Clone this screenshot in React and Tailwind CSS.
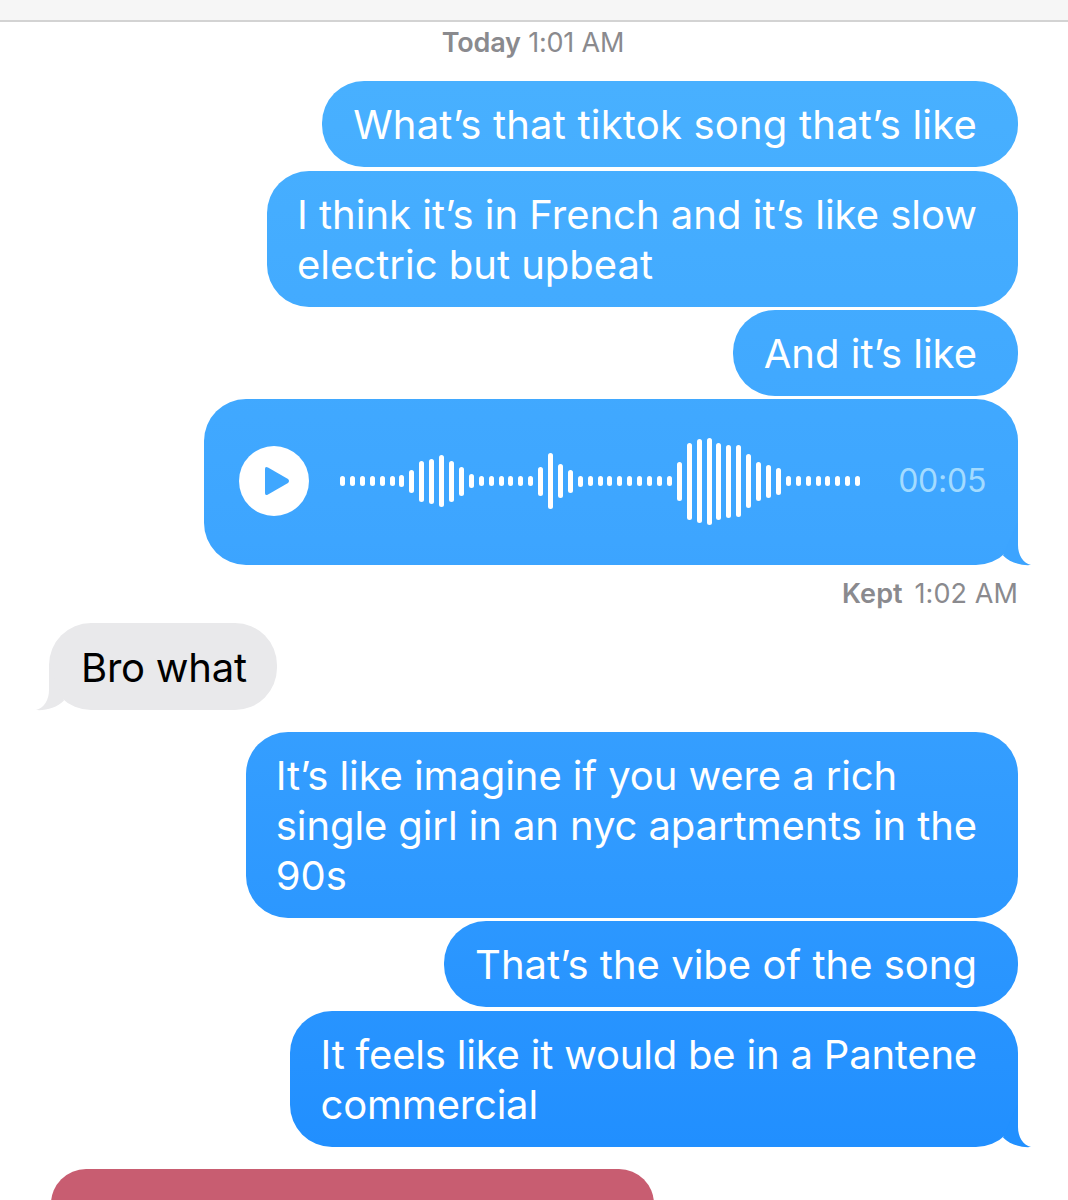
const font = { fontFamily: 'Inter, "Liberation Sans", sans-serif' }

const small = 10
const bars = [
  small, small, small, small, small, small, 12, 23, 41, 45, 52, 41, 29, 14,
  small, small, small, small, small, small, 29, 56, 34, 23, 11,
  small, small, small, small, small, small, small, small, small,
  39, 77, 84, 87, 77, 73, 72, 54, 39, 33, 27,
  small, small, small, small, small, small, small, small,
]

function Tail({ className }) {
  return (
    <svg width="50" height="44" viewBox="-32 -43 50 44" className={className}>
      <path d="M0 -42 L0 -20 C0 -10 5 -2 13 0 C4 0.8 -8 -2 -15 -9.5 L-1 -42 Z" />
    </svg>
  )
}

function Sent({ className, children, tail }) {
  return (
    <div className={`relative bg-fixed bg-gradient-to-b from-[#4ab2ff] via-[#3da5ff] via-45% to-[#1e8dff] rounded-[42px] text-white text-[40px] leading-[50px] whitespace-nowrap pl-[31px] pr-[41px] pt-[19px] pb-[17px] ${className}`}>
      {children}
      {tail}
    </div>
  )
}

export default function App() {
  return (
    <div className="h-[1200px] overflow-hidden bg-white flex flex-col" style={font}>
      <div className="h-[22px] shrink-0 bg-[#f6f6f6] border-b-2 border-[#d3d3d3]" />
      <div className="h-[40px] mt-[1px] leading-[40px] text-center text-[27px] tracking-[-0.2px] text-[#8a8a8e] mb-[18px] pr-[2px]">
        <span className="font-semibold">Today</span> 1:01 AM
      </div>

      <div className="flex flex-col items-end pr-[50px]">
        <Sent className="tracking-[0.2px]">What’s that tiktok song that’s like</Sent>
        <Sent className="mt-[4px] !pl-[30px]">I think it’s in French and it’s like slow<br />electric but upbeat</Sent>
        <Sent className="mt-[3px]">And it’s like</Sent>

        <div className="relative mt-[3px] w-[814px] h-[166px] pb-[2px] bg-fixed bg-gradient-to-b from-[#4ab2ff] via-[#3da5ff] via-45% to-[#1e8dff] rounded-[42px] flex items-center pl-[35px]">
          <div className="w-[70px] h-[70px] rounded-full bg-white flex items-center justify-center shrink-0">
            <svg width="26" height="30" viewBox="0 0 26 30" className="ml-[6px]">
              <path d="M1 3 Q1 0 4 1.5 L24 13 Q26 15 24 17 L4 28.5 Q1 30 1 27 Z" fill="#3fa7ff" />
            </svg>
          </div>
          <div className="flex items-center gap-[4.92px] ml-[31px]">
            {bars.map((h, i) => (
              <div key={i} className="w-[5px] rounded-full bg-white" style={{ height: h }} />
            ))}
          </div>
          <div className="ml-[38px] text-[32px] tracking-[-0.2px] text-[#a3dbff]">00:05</div>
          <Tail className="absolute right-[-18px] bottom-[-1px] fill-[#3ca4ff]" />
        </div>

        <div className="h-[40px] mt-[9px] leading-[40px] text-[27px] tracking-[0.1px] text-[#8a8a8e]">
          <span className="font-semibold mr-[4px]">Kept</span> 1:02 AM
        </div>
      </div>

      <div className="flex mt-[9px] pl-[49px]">
        <div className="relative bg-[#e9e9eb] rounded-[42px] text-black text-[40px] leading-[50px] tracking-[-0.25px] whitespace-nowrap pl-[32px] pr-[30px] pt-[20px] pb-[17px]">
          Bro what
          <Tail className="absolute left-[-18px] bottom-[-1px] fill-[#e9e9eb] -scale-x-100" />
        </div>
      </div>

      <div className="flex flex-col items-end pr-[50px] mt-[22px]">
        <Sent className="!pl-[30px] tracking-[-0.1px]">It’s like imagine if you were a rich<br />single girl in an nyc apartments in the<br />90s</Sent>
        <Sent className="mt-[3px]">That’s the vibe of the song</Sent>
        <Sent className="mt-[4px] tracking-[-0.2px]" tail={<Tail className="absolute right-[-18px] bottom-[-1px] fill-[#2190ff]" />}>
          It feels like it would be in a Pantene<br />commercial
        </Sent>
      </div>

      <div className="mt-[22px] ml-[51px] w-[603px] h-[70px] shrink-0 rounded-[42px] bg-[#c85d71]" />
    </div>
  )
}
